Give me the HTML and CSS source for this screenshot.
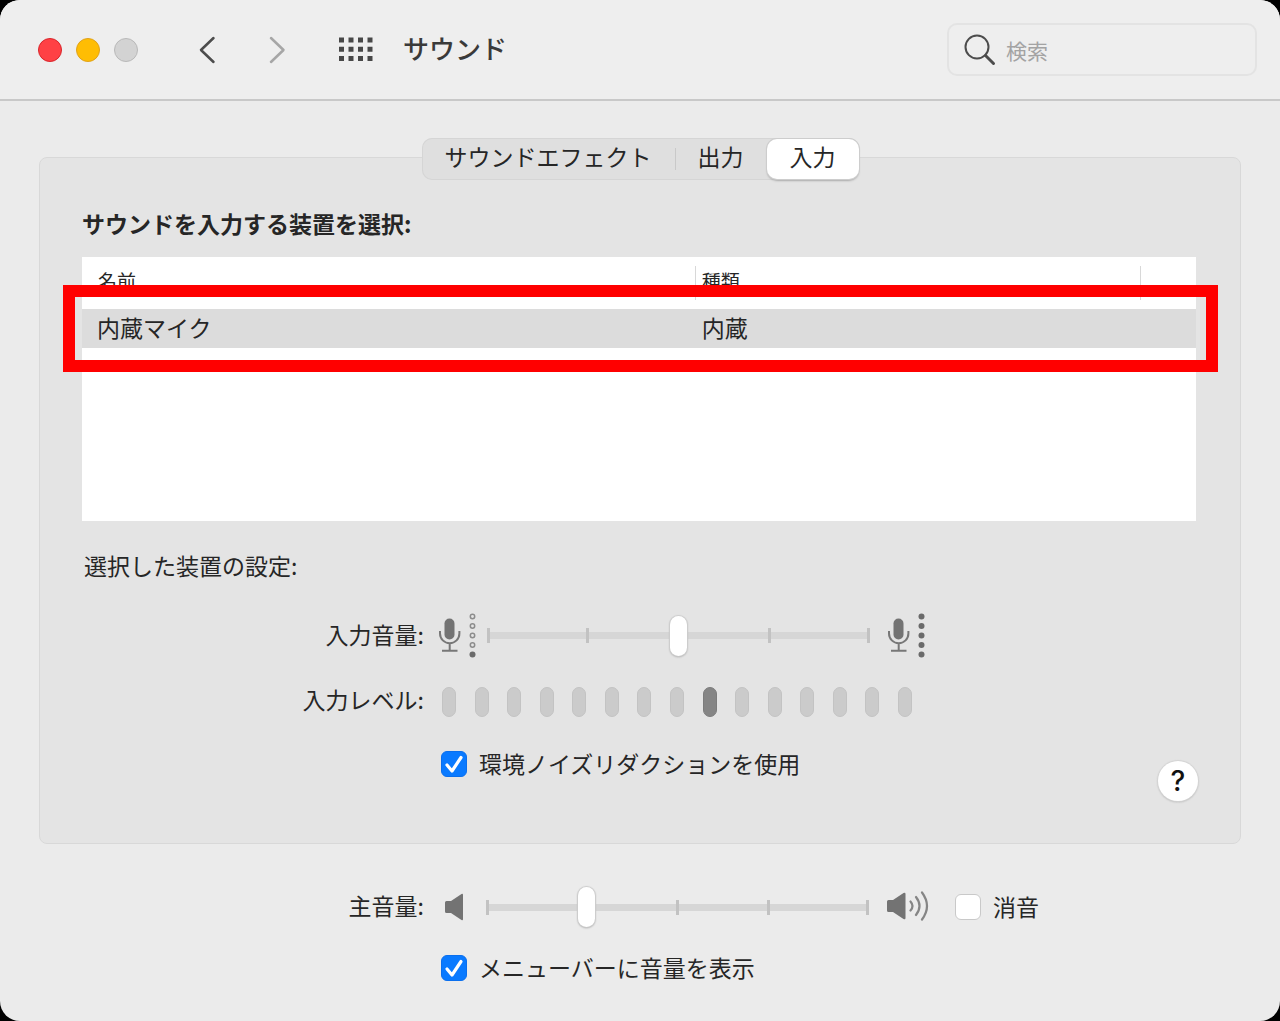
FILE: index.html
```html
<!DOCTYPE html>
<html lang="ja">
<head>
<meta charset="utf-8">
<meta name="viewport" content="width=device-width, initial-scale=1">
<title>サウンド</title>
<link rel="stylesheet" href="styles.css">
</head>
<body>
<div class="window">
  <header class="toolbar">
    <div class="lights">
      <button class="light light-close" aria-label="閉じる"></button>
      <button class="light light-min" aria-label="しまう"></button>
      <button class="light light-zoom" aria-label="拡大" disabled></button>
    </div>
    <nav class="nav">
      <button class="tool" aria-label="戻る">
        <svg width="40" height="40" viewBox="0 0 40 40"><path d="M26.500 8 14 20l12.500 12" fill="none" stroke="#4c4c4c" stroke-width="2.500" stroke-linecap="round" stroke-linejoin="round"/></svg>
      </button>
      <button class="tool" aria-label="進む" disabled>
        <svg width="40" height="40" viewBox="0 0 40 40"><path d="M14 8 26.500 20 14 32" fill="none" stroke="#a6a6a6" stroke-width="2.500" stroke-linecap="round" stroke-linejoin="round"/></svg>
      </button>
    </nav>
    <button class="tool" aria-label="すべてを表示">
      <svg width="40" height="40" viewBox="0 0 40 40" fill="#474747">
        <path d="M4 7.500h5v5h-5zM13.500 7.500h5v5h-5zM23 7.500h5v5h-5zM32.500 7.500h5v5h-5zM4 16.700h5v5h-5zM13.500 16.700h5v5h-5zM23 16.700h5v5h-5zM32.500 16.700h5v5h-5zM4 26h5v5h-5zM13.500 26h5v5h-5zM23 26h5v5h-5zM32.500 26h5v5h-5z"/>
      </svg>
    </button>
    <h1 class="title">サウンド</h1>
    <label class="search">
      <svg width="32" height="32" viewBox="0 0 32 32" fill="none" stroke="#4c4c4c"><circle cx="13" cy="13" r="11.500" stroke-width="2"/><path d="m21.500 21.500 8 8" stroke-width="3" stroke-linecap="round"/></svg>
      <input class="search-input" type="search" placeholder="検索" aria-label="検索">
    </label>
  </header>

  <main>
    <section class="panel">
      <div class="tabs" role="tablist">
        <button class="tab" role="tab" aria-selected="false">サウンドエフェクト</button>
        <button class="tab tab-divided" role="tab" aria-selected="false">出力</button>
        <button class="tab tab-active" role="tab" aria-selected="true">入力</button>
      </div>

      <h2 class="heading">サウンドを入力する装置を選択:</h2>
      <div class="devices">
        <table class="table">
          <colgroup><col class="col-name"><col class="col-kind"><col></colgroup>
          <thead>
            <tr><th scope="col"><span class="th">名前</span></th><th scope="col"><span class="th th-line">種類</span></th><th><span class="th th-line"></span></th></tr>
          </thead>
          <tbody>
            <tr><td>内蔵マイク</td><td>内蔵</td><td></td></tr>
          </tbody>
        </table>
        <div class="marker"></div>
      </div>

      <p class="subheading">選択した装置の設定:</p>
      <div class="rows">
        <div class="row">
          <label class="row-label" for="input-volume">入力音量:</label>
          <div class="slider-line">
            <svg width="41" height="46" viewBox="0 0 41 46" aria-hidden="true">
              <rect x="5.500" y="5.500" width="10" height="21" rx="5" fill="#737373"/>
              <path d="M1 18v2.500a9.700 9.700 0 0 0 19.400 0V18M10.700 30.500v7M3 37.800h15.500" fill="none" stroke="#777" stroke-width="2"/>
              <g fill="none" stroke="#8c8c8c" stroke-width="1.500"><circle cx="33.500" cy="3.500" r="2.200"/><circle cx="33.500" cy="13" r="2.200"/><circle cx="33.500" cy="22.500" r="2.200"/><circle cx="33.500" cy="32" r="2.200"/></g>
              <circle cx="33.500" cy="41.500" r="3" fill="#6a6a6a"/>
            </svg>
            <input class="slider" id="input-volume" type="range" min="0" max="100" value="50">
            <svg class="loud" width="41" height="46" viewBox="0 0 41 46" aria-hidden="true">
              <rect x="5.500" y="5.500" width="10" height="21" rx="5" fill="#737373"/>
              <path d="M1 18v2.500a9.700 9.700 0 0 0 19.400 0V18M10.700 30.500v7M3 37.800h15.500" fill="none" stroke="#777" stroke-width="2"/>
              <g fill="#6a6a6a"><circle cx="33.500" cy="3.500" r="3"/><circle cx="33.500" cy="13" r="3"/><circle cx="33.500" cy="22.500" r="3"/><circle cx="33.500" cy="32" r="3"/><circle cx="33.500" cy="41.500" r="3"/></g>
            </svg>
          </div>
        </div>
        <div class="row">
          <span class="row-label" id="level-label">入力レベル:</span>
          <div class="level" role="meter" aria-labelledby="level-label" aria-valuemin="0" aria-valuemax="15" aria-valuenow="9">
            <i></i><i></i><i></i><i></i><i></i><i></i><i></i><i></i><i class="on"></i><i></i><i></i><i></i><i></i><i></i><i></i>
          </div>
        </div>
        <div class="row row-last">
          <label class="check"><input type="checkbox" checked><span>環境ノイズリダクションを使用</span></label>
          <button class="help" aria-label="ヘルプ">?</button>
        </div>
      </div>
    </section>

    <section class="master">
      <div class="row">
        <label class="row-label" for="main-volume">主音量:</label>
        <div class="slider-line">
          <svg width="40" height="32" viewBox="0 0 40 32" aria-hidden="true"><path d="M6 11.500q0-1.500 1.500-1.500H12L22.500 3q1.500-1 1.500 1v24q0 2-1.500 1L12 22H7.500Q6 22 6 20.500z" fill="#737373"/></svg>
          <input class="slider" id="main-volume" type="range" min="0" max="100" value="26">
          <svg class="loud" width="44" height="32" viewBox="0 0 44 32" aria-hidden="true"><path d="M0 10.500Q0 9 1.500 9H6L16.500 2Q18.500 1 18.500 3v24q0 2-2 1L6 21H1.500Q0 21 0 19.500z" fill="#737373"/><path d="M23.500 10.500q4 4.500 0 9M29 6q7 9 0 18M35 1.500q10 13.500 0 27" fill="none" stroke="#858585" stroke-width="2.200" stroke-linecap="round"/></svg>
          <label class="check mute"><input type="checkbox"><span>消音</span></label>
        </div>
      </div>
      <div class="row row-last">
        <label class="check"><input type="checkbox" checked><span>メニューバーに音量を表示</span></label>
      </div>
    </section>
  </main>
</div>
</body>
</html>
```

FILE: styles.css
```css
* { box-sizing: border-box; }

body {
  margin: 0;
  background: #000;
  color: #262626;
  font: 23px/32px "Noto Sans CJK JP", sans-serif;
}

button, input { font: inherit; color: inherit; }
button { border: 0; padding: 0; background: none; }
svg { display: block; flex: none; }

.window {
  min-height: 100vh;
  border-radius: 20px;
  background: #ebebeb;
  overflow: hidden;
}

/* Toolbar */
.toolbar {
  display: flex;
  align-items: center;
  height: 101px;
  padding: 0 23px 0 38px;
  background: #eee;
  border-bottom: 2px solid #c8c8c8;
}
.lights { display: flex; gap: 14px; }
.light { width: 24px; height: 24px; border-radius: 50%; border: 1px solid; }
.light-close { background: #ff4145; border-color: #d9252b; }
.light-min { background: #ffbd03; border-color: #e0a21a; }
.light-zoom { background: #d3d3d3; border-color: #b9b9b9; }
.nav { display: flex; gap: 30px; margin: 0 38px 0 49px; }
.tool { width: 40px; height: 40px; }
.title {
  margin: 0 0 0 28px;
  padding-bottom: 4px;
  color: #3a3a3a;
  font-size: 26px;
  font-weight: 500;
}
.search {
  display: flex;
  align-items: center;
  gap: 10px;
  width: 310px;
  height: 53px;
  margin-left: auto;
  padding: 0 15px;
  border: 2px solid #e3e3e3;
  border-radius: 10px;
}
.search-input {
  flex: 1;
  min-width: 0;
  padding: 0;
  border: 0;
  outline: 0;
  background: none;
  font-size: 21px;
}
.search-input::placeholder { color: #a3a3a3; }

/* Panel and tabs */
.panel {
  margin: 56px 39px 0;
  padding: 0 42px 42px;
  border: 1px solid #d8d8d8;
  border-radius: 8px;
  background: #e4e4e4;
}
.tabs {
  display: flex;
  width: fit-content;
  height: 42px;
  margin: -20px auto 0;
  border-radius: 10px;
  background: #dfdfdf;
  box-shadow: inset 0 0 0 1px #d5d5d5;
}
.tab { padding: 0 23px 6px; border-radius: 10px; }
.tab-divided {
  background: linear-gradient(#c9c9c9, #c9c9c9) left 10px / 1px 22px no-repeat;
  border-radius: 0;
}
.tab-active {
  background: #fff;
  box-shadow: 0 0 0 1px #cdcdcd, 0 2px 2px #aaa;
  margin: 1px 0;
}

/* Device list */
.heading { margin: 27px 0 18px; font-size: 23px; font-weight: 700; }
.devices {
  position: relative;
  height: 264px;
  margin-right: 2px;
  background: #fff;
}
.table {
  width: 100%;
  table-layout: fixed;
  border-collapse: collapse;
  text-align: left;
}
.col-name { width: 55%; }
.col-kind { width: 40%; }
.table th { height: 52px; padding: 0; font-size: 19px; font-weight: 400; }
.th {
  display: block;
  height: 34px;
  padding-left: 6px;
  line-height: 30px;
}
.table th:first-child .th { padding-left: 16px; }
.th-line { border-left: 1px solid #d8d8d8; }
.table td { height: 39px; padding: 0 0 4px 7px; background: #dcdcdc; }
.table td:first-child { padding-left: 15px; }
.marker {
  position: absolute;
  top: 28px;
  left: -19px;
  right: -22px;
  height: 87px;
  border: 12px solid #f00;
}

/* Settings rows */
.subheading { margin: 28px 0 22px 2px; }
.row {
  display: grid;
  grid-template-columns: 344px 1fr;
  column-gap: 13px;
  align-items: center;
  height: 65px;
}
.row-label { padding: 0 2px 4px 0; text-align: right; }
.slider-line { display: flex; align-items: center; }
.slider {
  appearance: none;
  width: 397px;
  height: 41px;
  margin: 0;
  background:
    linear-gradient(#c2c2c2, #c2c2c2) 7px 50% / 3px 15px no-repeat,
    linear-gradient(#c2c2c2, #c2c2c2) 27% 50% / 3px 15px no-repeat,
    linear-gradient(#c2c2c2, #c2c2c2) 50% 50% / 3px 15px no-repeat,
    linear-gradient(#c2c2c2, #c2c2c2) 73% 50% / 3px 15px no-repeat,
    linear-gradient(#c2c2c2, #c2c2c2) right 7px top 50% / 3px 15px no-repeat,
    linear-gradient(#d6d6d6, #d6d6d6) 50% 50% / 380px 7px no-repeat;
}
.slider::-webkit-slider-thumb {
  appearance: none;
  width: 17px;
  height: 40px;
  border-radius: 9px;
  background: #fff;
  box-shadow: 0 0 1px 1px #ccc, 0 1px 2px #999;
}
.loud { margin-left: 11px; }
.level {
  display: flex;
  justify-content: space-between;
  width: 470px;
  margin: 2px 0 0 3px;
}
.level i {
  width: 14px;
  height: 30px;
  border: 1px solid #c3c3c3;
  border-radius: 7px;
  background: #cbcbcb;
}
.level .on { background: #858585; border-color: #7c7c7c; }

.row-last {
  display: flex;
  justify-content: space-between;
  align-items: flex-start;
  height: auto;
  padding-left: 359px;
}
.check { display: flex; align-items: center; gap: 12px; height: 62px; }
.check span { padding-bottom: 3px; }
.check input {
  appearance: none;
  width: 26px;
  height: 26px;
  margin: 0;
  border: 1px solid #c9c9c9;
  border-radius: 6px;
  background: #fff;
}
.check input:checked {
  border-color: #0a6fee;
  background: #0a7aff url("data:image/svg+xml,%3Csvg xmlns='http://www.w3.org/2000/svg' viewBox='0 0 24 24'%3E%3Cpath d='M5 13l5 6L19 5.500' fill='none' stroke='white' stroke-width='3.200' stroke-linecap='round' stroke-linejoin='round'/%3E%3C/svg%3E") center / 24px no-repeat;
}
.help {
  width: 40px;
  height: 40px;
  margin-top: 28px;
  border-radius: 50%;
  background: #fff;
  box-shadow: 0 0 1px 1px #d4d4d4, 0 1px 2px #aaa;
  color: #111;
  font: 500 28px/40px Inter, sans-serif;
}

/* Main volume */
.master { padding: 32px 39px 20px 82px; }
.master .row { height: 61px; }
.mute { margin-left: 24px; }
```
